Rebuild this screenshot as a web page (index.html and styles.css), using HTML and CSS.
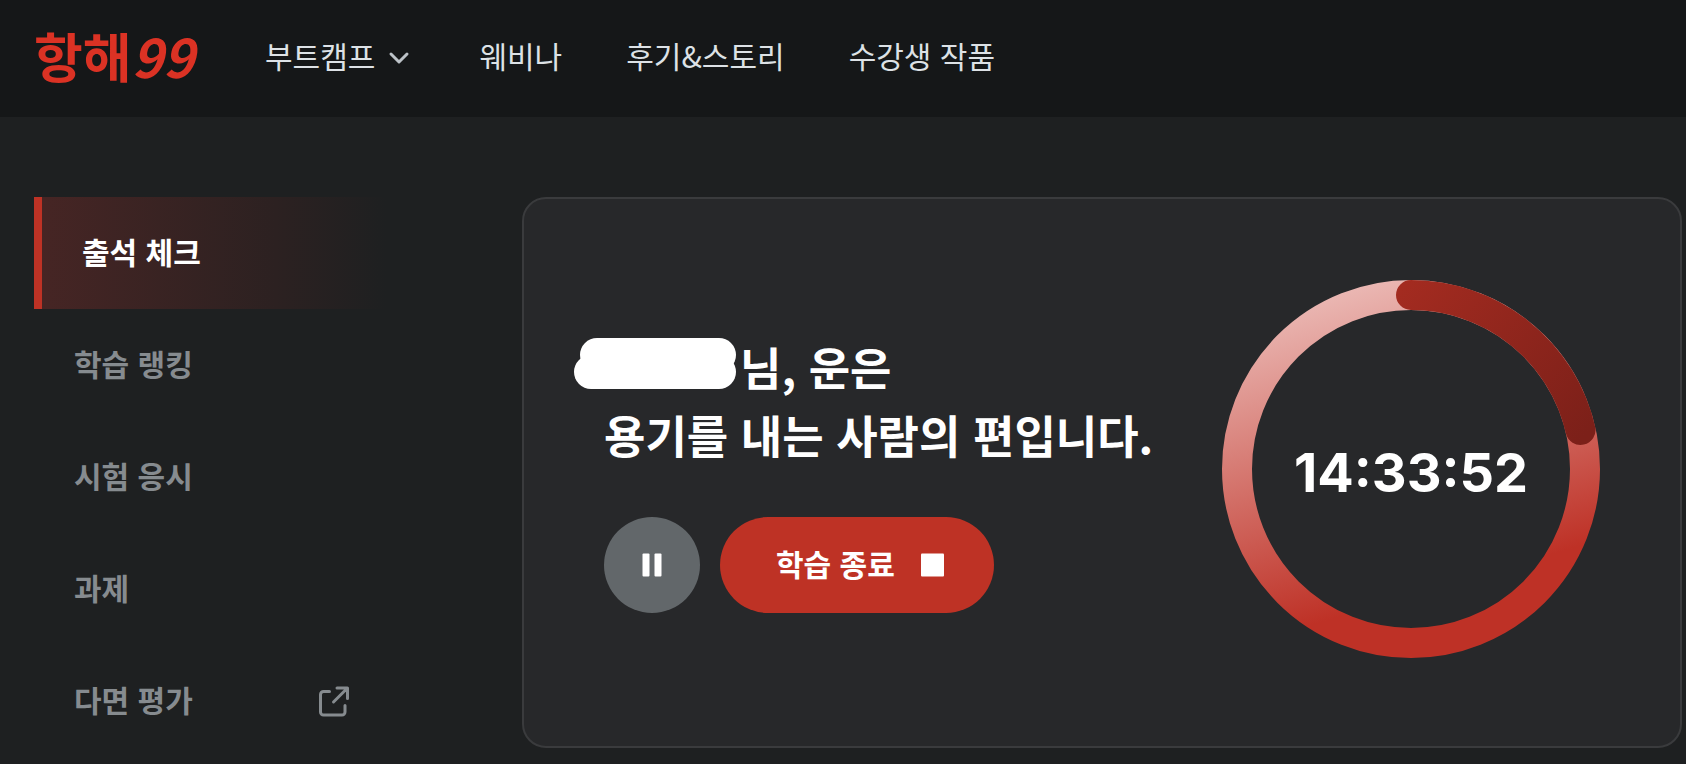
FILE: index.html
```html
<!DOCTYPE html>
<html lang="ko">
<head>
<meta charset="utf-8">
<meta name="viewport" content="width=device-width, initial-scale=1">
<title>항해99 출석 체크</title>
<link rel="stylesheet" href="styles.css">
</head>
<body>
<header class="header">
  <a class="logo" href="#">항해<em class="logo-number">99</em></a>
  <nav class="nav">
    <button class="nav-item" type="button"><span class="label">부트캠프</span>
      <svg class="chevron" viewBox="0 0 32 32" aria-hidden="true"><path d="M8 13l8 8 8-8"/></svg>
    </button>
    <a class="nav-item" href="#"><span class="label">웨비나</span></a>
    <a class="nav-item" href="#"><span class="label">후기&amp;스토리</span></a>
    <a class="nav-item" href="#"><span class="label">수강생 작품</span></a>
  </nav>
</header>
<div class="layout">
  <nav class="sidebar">
    <a class="side-item side-item-active" href="#"><span class="label">출석 체크</span></a>
    <a class="side-item" href="#"><span class="label">학습 랭킹</span></a>
    <a class="side-item" href="#"><span class="label">시험 응시</span></a>
    <a class="side-item" href="#"><span class="label">과제</span></a>
    <a class="side-item" href="#"><span class="label">다면 평가</span>
      <svg class="external" viewBox="0 0 32 32" aria-hidden="true"><path d="M11.500 6.500H5.500a3 3 0 0 0-3 3v17.500a3 3 0 0 0 3 3H24a3 3 0 0 0 3-3V20.500M15.500 17L29 3.500M19 3h10.500V13.500"/></svg>
    </a>
  </nav>
  <main class="card">
    <section class="study">
      <h1 class="greeting"><svg class="name-mask" viewBox="0 0 162 51" aria-hidden="true"><rect x="6" width="156" height="34" rx="17"/><rect y="17" width="162" height="34" rx="17"/></svg>님, 운은<br>용기를 내는 사람의 편입니다.</h1>
      <div class="actions">
        <button class="pause" type="button" aria-label="일시정지">
          <svg class="action-icon" viewBox="0 0 32 32" aria-hidden="true"><rect x="6.500" y="4.500" width="7" height="23" rx="1"/><rect x="18.500" y="4.500" width="7" height="23" rx="1"/></svg>
        </button>
        <button class="finish" type="button"><span class="label">학습 종료</span>
          <svg class="action-icon" viewBox="0 0 32 32" aria-hidden="true"><rect x="4" y="4.500" width="23" height="23" rx="1"/></svg>
        </button>
      </div>
    </section>
    <div class="timer">
      <svg class="ring" viewBox="0 0 378 378" aria-hidden="true">
        <defs>
          <linearGradient id="track" gradientUnits="userSpaceOnUse" x1="131" y1="-4" x2="222" y2="306"><stop stop-color="#ecbcb8"/><stop offset="1" stop-color="#be3126"/></linearGradient>
          <linearGradient id="progress" gradientUnits="userSpaceOnUse" x1="178" y1="10" x2="358" y2="160"><stop stop-color="#a32b20"/><stop offset="1" stop-color="#7c2019"/></linearGradient>
        </defs>
        <circle cx="189" cy="189" r="174" stroke="url(#track)"/>
        <path d="M189 15A174 174 0 0 1 358.500 150" stroke="url(#progress)"/>
      </svg>
      <time class="time">14:33:52</time>
    </div>
  </main>
</div>
</body>
</html>
```
FILE: styles.css
```css
* { box-sizing: border-box; }

body {
  margin: 0;
  min-height: 100vh;
  background: #1e2021;
  color: #fff;
  font-family: "Noto Sans CJK KR", sans-serif;
  font-size: 30px;
  line-height: 40px;
}

a { color: inherit; text-decoration: none; }

button {
  border: 0;
  padding: 0;
  background: none;
  color: inherit;
  font: inherit;
  cursor: pointer;
}

.label { padding-bottom: 4px; }

.header {
  display: flex;
  align-items: center;
  gap: 64px;
  min-height: 117px;
  padding: 0 34px 4px;
  background: #151718;
}

.logo {
  min-width: 167px;
  padding-bottom: 4px;
  color: #db3224;
  font-size: 53px;
  font-weight: 700;
  line-height: 64px;
}

.logo-number { font-style: italic; }

.nav {
  display: flex;
  align-items: center;
  gap: 64px;
  color: #dde2e6;
}

.nav-item {
  display: flex;
  align-items: center;
  gap: 8px;
  white-space: nowrap;
}

.chevron {
  width: 32px;
  height: 32px;
  fill: none;
  stroke: #bcc2c7;
  stroke-width: 3;
  stroke-linecap: round;
  stroke-linejoin: round;
}

.layout {
  display: grid;
  grid-template-columns: 352px 1fr;
  align-items: start;
  gap: 136px;
  padding: 80px 4px 0 34px;
}

.side-item {
  display: flex;
  align-items: center;
  justify-content: space-between;
  min-height: 112px;
  padding: 0 36px 0 40px;
  color: #868b8f;
  font-weight: 700;
}

.side-item-active {
  border-left: 8px solid #be3225;
  background: linear-gradient(90deg, #462524, #2c2121 68%, #1e2021);
  color: #fff;
}

.external {
  width: 32px;
  height: 32px;
  fill: none;
  stroke: currentColor;
  stroke-width: 3;
  stroke-linecap: round;
  stroke-linejoin: round;
}

.card {
  display: flex;
  align-items: center;
  justify-content: space-between;
  padding: 80px 80px 88px;
  border: 2px solid #3a3b3d;
  border-radius: 24px;
  background: #27282a;
}

.study { padding-top: 8px; }

.greeting {
  margin: 0 0 48px;
  font-size: 45px;
  font-weight: 700;
  line-height: 68px;
  white-space: nowrap;
}

.name-mask {
  width: 162px;
  height: 51px;
  margin: -10px 4px 10px -30px;
  vertical-align: middle;
  fill: #fff;
}

.actions { display: flex; gap: 20px; }

.pause,
.finish {
  display: flex;
  align-items: center;
  justify-content: center;
  min-height: 96px;
  border-radius: 48px;
}

.pause { width: 96px; background: #62676a; }

.finish {
  gap: 22px;
  padding: 0 45px 0 56px;
  background: #be3225;
  font-weight: 700;
}

.action-icon { width: 32px; height: 32px; fill: #fff; }

.timer {
  display: grid;
  place-items: center;
  width: 378px;
  padding-top: 1px;
}

.ring,
.time { grid-area: 1 / 1; }

.ring {
  display: block;
  width: 100%;
  fill: none;
  stroke-width: 30;
  stroke-linecap: round;
}

.time {
  padding-top: 8px;
  font-family: Inter, sans-serif;
  font-size: 54px;
  font-weight: 700;
  line-height: 64px;
}
```
